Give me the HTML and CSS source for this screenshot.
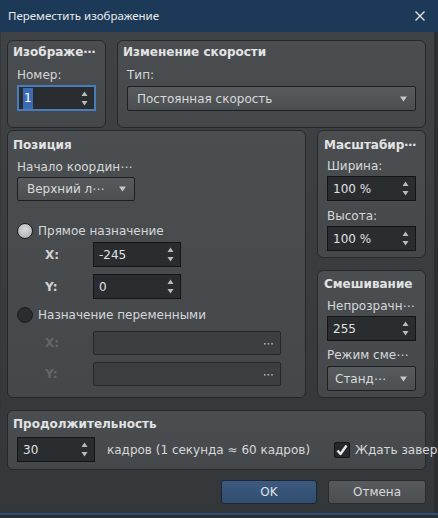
FILE: index.html
```html
<!DOCTYPE html>
<html lang="ru">
<head>
<meta charset="utf-8">
<title>Переместить изображение</title>
<link rel="stylesheet" href="styles.css">
</head>
<body>
<div class="window">
  <div class="titlebar">
    <span class="title">Переместить изображение</span>
    <svg class="close" width="10" height="10" viewBox="0 0 10 10"><path d="M0.5 0.5 L9.5 9.5 M9.5 0.5 L0.5 9.5" stroke="#e6e6e6" stroke-width="1.3" fill="none"/></svg>
  </div>
  <div class="body">
    <div class="row row1">
      <section class="group g-image">
        <div class="gtitle">Изображе⋯</div>
        <div class="label">Номер:</div>
        <div class="spin focus"><span class="val"><span class="sel">1</span></span><svg class="arrows" width="7" height="15" viewBox="0 0 7 15"><path d="M0.5 5 L3.5 0.5 L6.5 5 Z M0.5 10 L3.5 14.5 L6.5 10 Z" fill="#b9bbbd"/></svg></div>
      </section>
      <section class="group g-speed">
        <div class="gtitle">Изменение скорости</div>
        <div class="label">Тип:</div>
        <div class="combo"><span class="ctext">Постоянная скорость</span><svg class="carrow" width="7" height="6" viewBox="0 0 7 6"><path d="M0 0.5 H7 L3.5 5.5 Z" fill="#c4c6c8"/></svg></div>
      </section>
    </div>
    <div class="row row2">
      <section class="group g-pos">
        <div class="gtitle">Позиция</div>
        <div class="label">Начало координ⋯</div>
        <div class="combo origin"><span class="ctext">Верхний л⋯</span><svg class="carrow" width="7" height="6" viewBox="0 0 7 6"><path d="M0 0.5 H7 L3.5 5.5 Z" fill="#c4c6c8"/></svg></div>
        <div class="radio-row r1"><span class="radio on"></span><span>Прямое назначение</span></div>
        <div class="coord c1"><span class="clabel">X:</span><div class="spin sp-xy"><span class="val">-245</span><svg class="arrows" width="7" height="15" viewBox="0 0 7 15"><path d="M0.5 5 L3.5 0.5 L6.5 5 Z M0.5 10 L3.5 14.5 L6.5 10 Z" fill="#b9bbbd"/></svg></div></div>
        <div class="coord c2"><span class="clabel">Y:</span><div class="spin sp-xy"><span class="val">0</span><svg class="arrows" width="7" height="15" viewBox="0 0 7 15"><path d="M0.5 5 L3.5 0.5 L6.5 5 Z M0.5 10 L3.5 14.5 L6.5 10 Z" fill="#b9bbbd"/></svg></div></div>
        <div class="radio-row r2"><span class="radio"></span><span>Назначение переменными</span></div>
        <div class="coord c3"><span class="clabel dis">X:</span><div class="varfield"><svg width="9" height="2" viewBox="0 0 9 2"><rect x="0" y="0" width="1.6" height="1.6" fill="#a9abad"/><rect x="3.6" y="0" width="1.6" height="1.6" fill="#a9abad"/><rect x="7.2" y="0" width="1.6" height="1.6" fill="#a9abad"/></svg></div></div>
        <div class="coord c4"><span class="clabel dis">Y:</span><div class="varfield"><svg width="9" height="2" viewBox="0 0 9 2"><rect x="0" y="0" width="1.6" height="1.6" fill="#a9abad"/><rect x="3.6" y="0" width="1.6" height="1.6" fill="#a9abad"/><rect x="7.2" y="0" width="1.6" height="1.6" fill="#a9abad"/></svg></div></div>
      </section>
      <div class="rcol">
        <section class="group g-scale">
          <div class="gtitle">Масштабир⋯</div>
          <div class="label">Ширина:</div>
          <div class="spin"><span class="val">100 %</span><svg class="arrows" width="7" height="15" viewBox="0 0 7 15"><path d="M0.5 5 L3.5 0.5 L6.5 5 Z M0.5 10 L3.5 14.5 L6.5 10 Z" fill="#b9bbbd"/></svg></div>
          <div class="label l2">Высота:</div>
          <div class="spin"><span class="val">100 %</span><svg class="arrows" width="7" height="15" viewBox="0 0 7 15"><path d="M0.5 5 L3.5 0.5 L6.5 5 Z M0.5 10 L3.5 14.5 L6.5 10 Z" fill="#b9bbbd"/></svg></div>
        </section>
        <section class="group g-blend">
          <div class="gtitle">Смешивание</div>
          <div class="label">Непрозрачн⋯</div>
          <div class="spin"><span class="val">255</span><svg class="arrows" width="7" height="15" viewBox="0 0 7 15"><path d="M0.5 5 L3.5 0.5 L6.5 5 Z M0.5 10 L3.5 14.5 L6.5 10 Z" fill="#b9bbbd"/></svg></div>
          <div class="label l3">Режим сме⋯</div>
          <div class="combo blend"><span class="ctext">Станд⋯</span><svg class="carrow" width="7" height="6" viewBox="0 0 7 6"><path d="M0 0.5 H7 L3.5 5.5 Z" fill="#c4c6c8"/></svg></div>
        </section>
      </div>
    </div>
    <section class="group g-dur">
      <div class="gtitle">Продолжительность</div>
      <div class="durrow">
        <div class="spin sp-dur"><span class="val">30</span><svg class="arrows" width="7" height="15" viewBox="0 0 7 15"><path d="M0.5 5 L3.5 0.5 L6.5 5 Z M0.5 10 L3.5 14.5 L6.5 10 Z" fill="#b9bbbd"/></svg></div>
        <span class="frames">кадров (1 секунда ≈ 60 кадров)</span>
        <div class="check"><span class="cbox"><svg width="12" height="12" viewBox="0 0 12 12"><path d="M1.5 6.5 L4.5 10 L10.5 1.5" stroke="#e8e8e8" stroke-width="2.4" fill="none" stroke-linejoin="round"/></svg></span><span class="ctext2">Ждать завер</span></div>
      </div>
    </section>
    <div class="buttons">
      <div class="btn ok">OK</div>
      <div class="btn cancel">Отмена</div>
    </div>
  </div>
  <div class="bottomline"></div>
</div>
</body>
</html>
```
FILE: styles.css
```css
* { box-sizing: border-box; }
html, body { margin: 0; padding: 0; }
body { background: #2c2f32; }

.window {
  width: 438px;
  height: 518px;
  overflow: hidden;
  background: #2c2f32;
  font-family: "DejaVu Sans", sans-serif;
  font-size: 12px;
  color: #d6d7d8;
}

.titlebar {
  height: 32px;
  background: #1c3a58;
  display: flex;
  align-items: center;
  justify-content: space-between;
  padding: 0 13px 1px 8px;
}
.title {
  font-family: "Noto Sans", sans-serif;
  font-size: 11.5px;
  color: #e8eaec;
}
.close { display: block; margin-top: 1px; }

.body {
  width: 434px;
  height: 481px;
  background: linear-gradient(#404346, #34373a);
  border-left: 1px solid #33363a;
  padding: 8px 8px 0 6px;
  display: flex;
  flex-direction: column;
}

.bottomline {
  height: 2px;
  background: #2b4f78;
}

.row { display: flex; gap: 11px; }
.row1 { height: 88px; }
.row2 { height: 268px; margin-top: 2px; }

.group {
  border: 1px solid #26282a;
  border-radius: 6px;
  background: linear-gradient(#4b4e51, #45484b);
  padding: 3px 9px 0 9px;
  display: flex;
  flex-direction: column;
}
.gtitle {
  font-weight: bold;
  line-height: 16px;
  margin-left: -4px;
  color: #e2e3e4;
  white-space: nowrap;
}
.label {
  line-height: 16px;
  margin-top: 7px;
  white-space: nowrap;
}

.g-image { width: 99px; }
.g-speed { flex: 1; }
.g-image .spin, .g-speed .combo { margin-top: 3px; }

.spin {
  height: 25px;
  background: #2a2d30;
  border: 1px solid #141516;
  display: flex;
  align-items: center;
  justify-content: space-between;
  padding: 0 6px 0 5px;
  color: #e0e1e2;
}
.spin .val { line-height: 16px; }
.spin .arrows { display: block; }
.spin.focus {
  border: 2px solid #4a7cbd;
  height: 26px;
  margin-top: 2px;
  padding-left: 4px;
}
.sel {
  display: inline-block;
  background: #3d6bb3;
  color: #ffffff;
  padding: 2px 1px 3px 1px;
  line-height: 16px;
}

.combo {
  height: 25px;
  background: linear-gradient(#585b5e, #4c4f52);
  border: 1px solid #1d1f21;
  border-radius: 2px;
  display: flex;
  align-items: center;
  justify-content: space-between;
  padding: 0 8px 0 9px;
  color: #d8d9da;
  white-space: nowrap;
}
.carrow { display: block; }

/* Position group */
.g-pos { width: 299px; padding-top: 6px; }
.g-pos .label { margin-top: 6px; }
.combo.origin { width: 118px; height: 24px; margin-top: 2px; padding-left: 9px; }

.radio-row {
  display: flex;
  align-items: center;
  gap: 5px;
  height: 16px;
  line-height: 16px;
  white-space: nowrap;
}
.r1 { margin-top: 22px; }
.r2 { margin-top: 8px; }
.radio {
  width: 16px;
  height: 16px;
  border-radius: 50%;
  border: 1px solid #1c1d1f;
  background: #2a2c2f;
  flex: none;
}
.radio.on {
  background: radial-gradient(circle at 50% 40%, #d8d9da 0%, #b8babc 65%, #9a9c9e 100%);
}

.coord {
  display: flex;
  align-items: center;
  padding-left: 28px;
}
.c1 { margin-top: 3px; }
.c2 { margin-top: 7px; }
.c3 { margin-top: 8px; }
.c4 { margin-top: 7px; }
.clabel { width: 48px; line-height: 16px; font-weight: bold; color: #d2d3d4; }
.clabel.dis { color: #636669; }
.sp-xy { width: 88px; }
.varfield {
  width: 188px;
  height: 24px;
  background: #3c3f42;
  border: 1px solid #242628;
  border-radius: 2px;
  display: flex;
  align-items: center;
  justify-content: flex-end;
  padding: 1px 7px 0 0;
}
.varfield svg { display: block; }

/* Right column */
.rcol { width: 109px; display: flex; flex-direction: column; gap: 12px; }
.g-scale { height: 128px; padding-top: 6px; }
.g-scale .label { margin-top: 5px; }
.g-scale .spin { margin-top: 2px; }
.g-scale .label.l2 { margin-top: 7px; }
.g-blend { height: 128px; padding-top: 5px; }
.g-blend .label { margin-top: 6px; }
.g-blend .spin { margin-top: 2px; }
.g-blend .label.l3 { margin-top: 6px; }
.combo.blend { margin-top: 3px; padding-left: 7px; }
.g-scale .gtitle, .g-blend .gtitle { margin-left: -3px; }

/* Duration */
.g-dur { height: 60px; margin-top: 12px; padding-top: 5px; padding-right: 0; }
.durrow { display: flex; align-items: center; margin-top: 5px; }
.sp-dur { width: 78px; }
.frames { margin-left: 12px; line-height: 16px; white-space: nowrap; }
.check {
  margin-left: auto;
  width: 91px;
  display: flex;
  align-items: center;
  gap: 5px;
  white-space: nowrap;
}
.cbox {
  width: 16px;
  height: 16px;
  flex: none;
  background: #26292c;
  border: 1px solid #141516;
  border-radius: 2px;
  display: flex;
  align-items: center;
  justify-content: center;
}
.cbox svg { display: block; }
.ctext2 { line-height: 16px; }

/* Buttons */
.buttons {
  display: flex;
  justify-content: flex-end;
  gap: 11px;
  margin-top: 10px;
}
.btn {
  height: 24px;
  border-radius: 3px;
  display: flex;
  align-items: center;
  justify-content: center;
  line-height: 16px;
}
.btn.ok {
  width: 96px;
  background: linear-gradient(#3d5a7f, #314d70);
  border: 1px solid #1a2738;
  color: #dfe2e6;
}
.btn.cancel {
  width: 98px;
  background: linear-gradient(#585b5e, #4c4f52);
  border: 1px solid #2a2c2f;
  color: #d8d9da;
}
```
